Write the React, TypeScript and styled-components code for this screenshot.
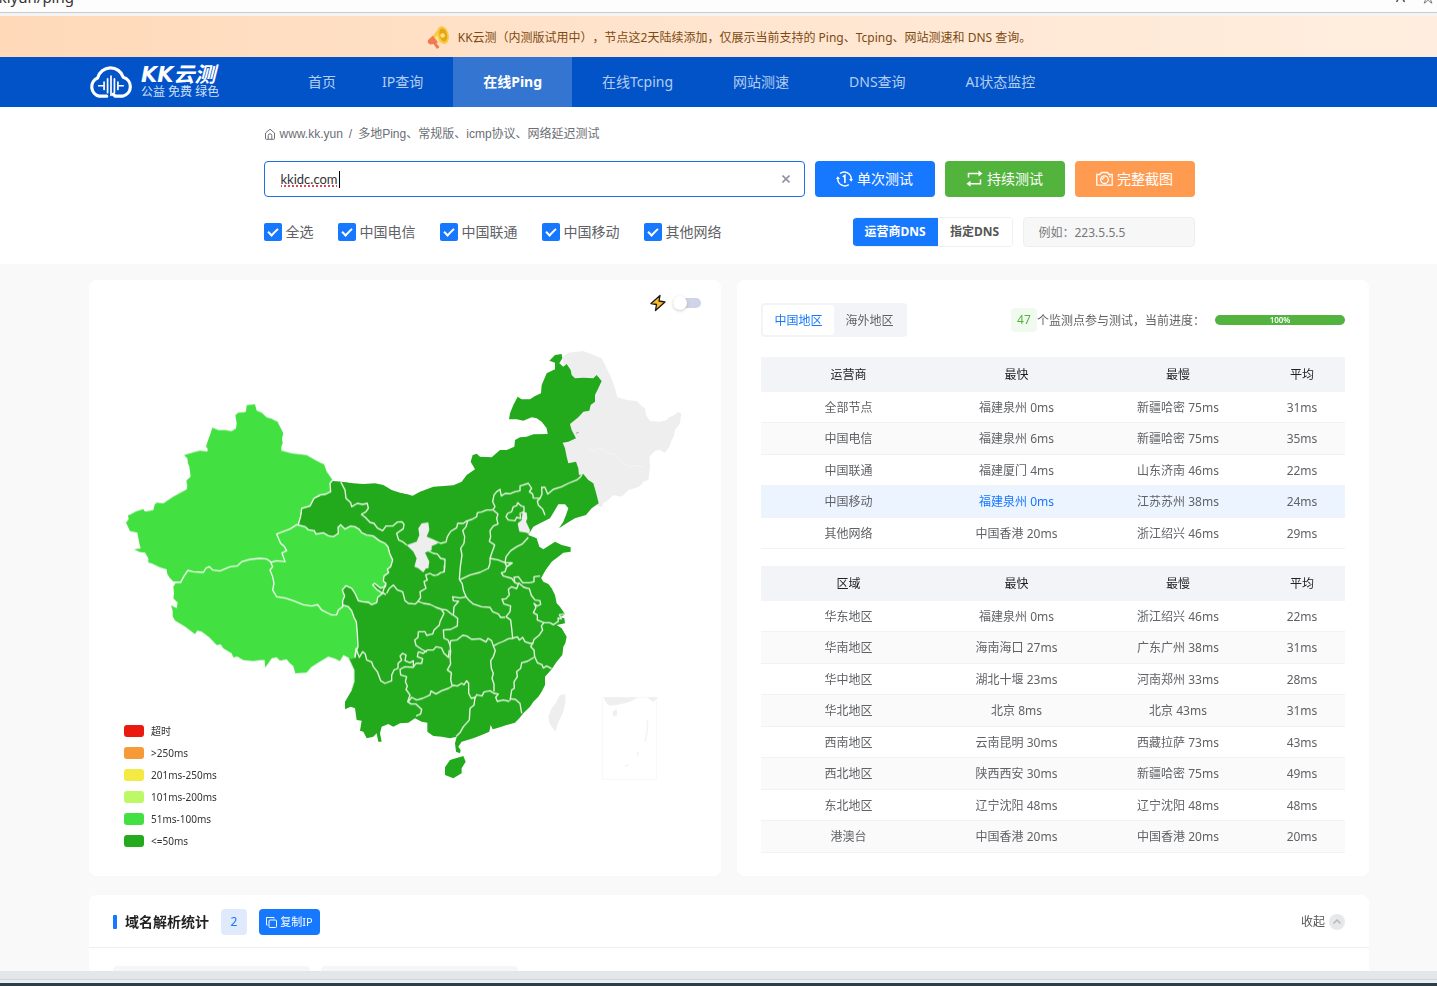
import React from 'react';
import styled, { createGlobalStyle } from 'styled-components';

const GlobalStyle = createGlobalStyle`
  *, *::before, *::after { box-sizing: border-box; }
  body {
    margin: 0;
    color: #606266;
    background: #f9f9f9;
    font: 12px/18px "Noto Sans", "Noto Sans CJK SC", sans-serif;
    text-spacing-trim: space-all;
  }
  button, input { font: inherit; }
  button { cursor: pointer; border: 0; padding: 0; }
`;

const Page = styled.div`
  display: flex;
  flex-direction: column;
  height: 100vh;
  overflow: hidden;
`;

const AddressStrip = styled.div`
  flex: none;
  display: flex;
  justify-content: space-between;
  align-items: flex-end;
  height: 16px;
  padding-bottom: 6px;
  overflow: hidden;
  background: #fdfdfd;
  border-bottom: 3px solid #f4f4f4;
  box-shadow: inset 0 -1px #cbcbcb;
  color: #333;
  font-size: 15px;
  line-height: 20px;
`;

const Address = styled.span`
  display: flex;
  justify-content: flex-end;
  width: 74px;
`;

const AddressTools = styled.span`
  display: flex;
  gap: 16px;
  padding-right: 2px;
  font-size: 14px;
`;

const Site = styled.div`
  flex: 1;
  min-height: 0;
  overflow: hidden;
`;

const Notice = styled.div`
  display: flex;
  align-items: center;
  justify-content: center;
  gap: 8px;
  height: 41px;
  padding: 2px 0 0 21px;
  background: linear-gradient(90deg, #ffd9b8, #ffe5cf 50%, #ffeedf);
  color: #7c4a12;
`;

const NavBar = styled.header`
  height: 50px;
  padding-left: 21px;
  background: #0353c8;
`;

const Wide = styled.div`
  display: flex;
  max-width: 1280px;
  height: 100%;
  margin: 0 auto;
`;

const Logo = styled.a`
  display: flex;
  align-items: center;
  gap: 8px;
  width: 189px;
  color: #fff;
  text-decoration: none;
`;

const LogoText = styled.span`
  display: flex;
  flex-direction: column;
`;

const LogoName = styled.span`
  font: italic bold 21px/20px "DejaVu Sans", "Noto Sans CJK SC", sans-serif;
`;

const LogoNote = styled.span`
  color: #cfe0f8;
  line-height: 14px;
`;

const NavLinks = styled.nav`
  display: flex;
`;

const NavLink = styled.a<{ $active?: boolean; $tight?: boolean }>`
  display: flex;
  align-items: center;
  padding: 0 ${p => (p.$tight ? 16 : 30)}px 0 30px;
  background: ${p => (p.$active ? '#3575d2' : 'transparent')};
  color: ${p => (p.$active ? '#fff' : '#b3cdf0')};
  font-size: 14px;
  font-weight: ${p => (p.$active ? 700 : 400)};
  text-decoration: none;
  white-space: nowrap;
`;

const SearchArea = styled.section`
  height: 157px;
  padding: 18px 0 0 21px;
  background: #fff;
`;

const SearchInner = styled.div`
  display: flex;
  flex-direction: column;
  max-width: 931px;
  margin: 0 auto;
`;

const Crumbs = styled.div`
  display: flex;
  align-items: center;
  gap: 4px;
  color: #6b6e75;
  font-family: "Liberation Sans", "Noto Sans CJK SC", sans-serif;
`;

const CrumbLink = styled.a`
  color: inherit;
  text-decoration: none;
`;

const Slash = styled.span`
  padding: 0 2px;
`;

const SearchRow = styled.div`
  display: flex;
  gap: 10px;
  margin-top: 18px;
`;

const HostField = styled.div`
  position: relative;
  flex: 1;
  display: flex;
  align-items: center;
  height: 36px;
  padding: 0 11px 0 16px;
  border: 1px solid #1f6fe0;
  border-radius: 4px;
`;

const HostInput = styled.input`
  flex: 1;
  border: 0;
  padding: 0;
  outline: 0;
  background: none;
  color: #333;
  font: 13px/20px Lato, sans-serif;
  text-decoration: underline dotted #e0405a 2px;
`;

const Caret = styled.span`
  position: absolute;
  left: 74px;
  top: 9px;
  width: 1px;
  height: 17px;
  background: #000;
`;

const Clear = styled.button`
  display: grid;
  place-items: center;
  width: 14px;
  height: 14px;
  background: none;
  color: #8f939b;
`;

const ActionButton = styled.button<{ $bg: string }>`
  display: flex;
  align-items: center;
  justify-content: center;
  gap: 4px;
  width: 120px;
  height: 36px;
  border-radius: 4px;
  background: ${p => p.$bg};
  color: #fff;
  font-size: 14px;
`;

const OptionRow = styled.div`
  display: flex;
  align-items: center;
  margin-top: 20px;
  height: 30px;
`;

const Checks = styled.div`
  flex: 1;
  display: flex;
  gap: 24px;
`;

const CheckLabel = styled.label`
  display: flex;
  align-items: center;
  gap: 4px;
  font-size: 14px;
`;

const CheckInput = styled.input`
  appearance: none;
  display: grid;
  place-items: center;
  width: 18px;
  height: 18px;
  margin: 0;
  border-radius: 2px;
  background: #1677ff;
  &::after {
    content: "";
    width: 10px;
    height: 6px;
    margin-bottom: 3px;
    border: solid #fff;
    border-width: 0 0 2px 2px;
    transform: rotate(-45deg);
  }
`;

const Segment = styled.div`
  display: flex;
  height: 30px;
  border: 1px solid #f0f0f0;
  border-left: 0;
  border-radius: 4px;
  overflow: hidden;
`;

const SegmentButton = styled.button<{ $on?: boolean }>`
  width: ${p => (p.$on ? 85 : 74)}px;
  background: ${p => (p.$on ? '#1677ff' : '#fff')};
  color: ${p => (p.$on ? '#fff' : '#555')};
  font-weight: 700;
`;

const DnsInput = styled.input`
  width: 172px;
  height: 30px;
  margin-left: 10px;
  padding: 0 15px;
  border: 1px solid #eee;
  border-radius: 4px;
  background: #f7f7f7;
  &::placeholder { color: #777; }
`;

const Content = styled.main`
  padding: 16px 0 0 21px;
`;

const ContentInner = styled.div`
  max-width: 1280px;
  margin: 0 auto;
`;

const Panels = styled.div`
  display: grid;
  grid-template-columns: 1fr 1fr;
  gap: 16px;
`;

const Card = styled.section`
  background: #fff;
  border-radius: 8px;
`;

const MapCard = styled(Card)`
  display: flex;
  flex-direction: column;
`;

const MapTools = styled.div`
  display: flex;
  align-items: center;
  justify-content: flex-end;
  gap: 7px;
  padding: 14px 20px 0 0;
`;

const Switch = styled.input`
  appearance: none;
  display: flex;
  align-items: center;
  width: 28px;
  height: 10px;
  margin: 0;
  border-radius: 5px;
  background: #cfd5e6;
  &::after {
    content: "";
    width: 14px;
    height: 14px;
    border-radius: 50%;
    background: #fff;
    box-shadow: 0 1px 3px rgba(0, 0, 0, 0.2);
  }
`;

const MapStack = styled.div`
  flex: 1;
  display: grid;
  padding-top: 23px;
  & > * { grid-area: 1 / 1; }
`;

const MapSvg = styled.svg`
  display: block;
  width: 100%;
`;

const Legend = styled.ul`
  align-self: end;
  display: flex;
  flex-direction: column;
  gap: 4px;
  width: 130px;
  margin: 0 0 26px 35px;
  padding: 0;
  list-style: none;
  color: #333;
  font-size: 10px;
`;

const LegendItem = styled.li<{ $color: string }>`
  display: flex;
  align-items: center;
  gap: 7px;
  &::before {
    content: "";
    width: 20px;
    height: 12px;
    border-radius: 3px;
    background: ${p => p.$color};
  }
`;

const StatsCard = styled(Card)`
  padding: 23px 24px;
`;

const StatsHead = styled.div`
  display: flex;
  align-items: center;
  height: 34px;
  margin-bottom: 20px;
`;

const Tabs = styled.div`
  display: flex;
  margin-right: auto;
  padding: 2px;
  border-radius: 4px;
  background: #f3f4f7;
`;

const Tab = styled.button<{ $on?: boolean }>`
  width: 71px;
  height: 30px;
  padding-top: 2px;
  border-radius: 3px;
  background: ${p => (p.$on ? '#fff' : 'transparent')};
  color: ${p => (p.$on ? '#1677ff' : '#606266')};
`;

const StatsText = styled.span`
  padding-top: 2px;
`;

const Count = styled.span`
  width: 26px;
  border-radius: 4px;
  background: #f0faef;
  color: #52b43c;
  line-height: 24px;
  text-align: center;
`;

const Progress = styled.div`
  width: 130px;
  margin-left: 10px;
  border-radius: 5px;
  background: #52b43f;
  color: #fff;
  font-size: 8px;
  font-weight: 600;
  line-height: 10px;
  text-align: center;
`;

const Table = styled.table`
  width: 100%;
  table-layout: fixed;
  border-collapse: collapse;
  text-align: center;
  & + & { margin-top: 17px; }
`;

const Th = styled.th<{ $w: number }>`
  width: ${p => p.$w}px;
  height: 35px;
  padding: 0;
  background: #f2f4f7;
  color: #222;
  font-weight: 400;
`;

const Row = styled.tr<{ $hot?: boolean }>`
  height: 31px;
  box-shadow: inset 0 -1px #f1f2f4;
  &:nth-child(even) {
    height: 32px;
    background: ${p => (p.$hot ? '#ecf4ff' : '#fafafa')};
  }
`;

const Td = styled.td<{ $link?: boolean }>`
  padding: 0;
  color: ${p => (p.$link ? '#1677ff' : 'inherit')};
`;

const DomainCard = styled(Card)`
  margin-top: 19px;
`;

const DomainHead = styled.div`
  display: flex;
  align-items: center;
  gap: 12px;
  height: 53px;
  padding: 2px 24px 0;
  border-bottom: 1px solid #eeeff1;
`;

const DomainTitle = styled.h2`
  display: flex;
  align-items: center;
  gap: 8px;
  margin: 0;
  color: #222;
  font-size: 14px;
  font-weight: 600;
  &::before {
    content: "";
    width: 4px;
    height: 14px;
    border-radius: 1px;
    background: #1677ff;
  }
`;

const DomainCount = styled.span`
  width: 26px;
  border-radius: 4px;
  background: #dfeafc;
  color: #1677ff;
  line-height: 26px;
  text-align: center;
`;

const CopyButton = styled.button`
  display: flex;
  align-items: center;
  justify-content: center;
  gap: 3px;
  width: 61px;
  height: 26px;
  border-radius: 4px;
  background: #1677ff;
  color: #fff;
  font-size: 11px;
`;

const Collapse = styled.button`
  display: flex;
  align-items: center;
  gap: 4px;
  margin-left: auto;
  background: none;
  color: #555;
`;

const DomainBlocks = styled.div`
  display: flex;
  gap: 11px;
  padding: 18px 24px;
`;

const DomainBlock = styled.div`
  width: 197px;
  height: 40px;
  border-radius: 4px;
  background: #f4f6f8;
`;

const WindowEdge = styled.div`
  flex: none;
  height: 15px;
  border-top: 8px solid #e3e7ea;
  border-bottom: 3px solid #2f3d46;
  background: #e9eff4;
  box-shadow: inset 0 1px #cfd5db;
`;

const navItems = ['首页', 'IP查询', '在线Ping', '在线Tcping', '网站测速', 'DNS查询', 'AI状态监控'];
const networks = ['全选', '中国电信', '中国联通', '中国移动', '其他网络'];
const legend: [string, string][] = [
  ['#ea1a10', '超时'],
  ['#f59a37', '>250ms'],
  ['#f3ea43', '201ms-250ms'],
  ['#bdf866', '101ms-200ms'],
  ['#43e041', '51ms-100ms'],
  ['#23aa1d', '<=50ms'],
];
const carriers = [
  ['全部节点', '福建泉州 0ms', '新疆哈密 75ms', '31ms'],
  ['中国电信', '福建泉州 6ms', '新疆哈密 75ms', '35ms'],
  ['中国联通', '福建厦门 4ms', '山东济南 46ms', '22ms'],
  ['中国移动', '福建泉州 0ms', '江苏苏州 38ms', '24ms'],
  ['其他网络', '中国香港 20ms', '浙江绍兴 46ms', '29ms'],
];
const regions = [
  ['华东地区', '福建泉州 0ms', '浙江绍兴 46ms', '22ms'],
  ['华南地区', '海南海口 27ms', '广东广州 38ms', '31ms'],
  ['华中地区', '湖北十堰 23ms', '河南郑州 33ms', '28ms'],
  ['华北地区', '北京 8ms', '北京 43ms', '31ms'],
  ['西南地区', '云南昆明 30ms', '西藏拉萨 73ms', '43ms'],
  ['西北地区', '陕西西安 30ms', '新疆哈密 75ms', '49ms'],
  ['东北地区', '辽宁沈阳 48ms', '辽宁沈阳 48ms', '48ms'],
  ['港澳台', '中国香港 20ms', '中国香港 20ms', '20ms'],
];

function StatTable({ first, rows, hot }: { first: string; rows: string[][]; hot?: number }) {
  const widths = [175, 161, 162, 86];
  return (
    <Table>
      <thead>
        <tr>
          {[first, '最快', '最慢', '平均'].map((h, i) => (
            <Th key={h} $w={widths[i]} scope="col">{h}</Th>
          ))}
        </tr>
      </thead>
      <tbody>
        {rows.map((r, i) => (
          <Row key={r[0]} $hot={hot === i}>
            {r.map((c, j) => (
              <Td key={j} $link={hot === i && j === 1}>{c}</Td>
            ))}
          </Row>
        ))}
      </tbody>
    </Table>
  );
}

const XINJIANG = 'M48 428 56 418 54 406 62 403 78 394 100 387 105 395 130 390 134 374 140 368 160 370 190 350 230 328 232 318 229 302 242 290 238 260 234 250 232 235 222 225 250 217 270 212 292 215 293 206 288 200 295 178 300 165 307 143 325 150 345 150 365 153 378 145 380 130 376 105 385 98 402 97 408 95 410 75 435 73 440 92 455 98 470 112 484 116 495 122 502 124 510 140 520 160 516 175 518 190 514 200 514 212 545 220 590 225 612 238 635 250 642 252 650 275 668 300 660 310 662 335 645 343 630 345 612 355 600 378 575 385 572 408 565 433 540 447 500 462 512 490 522 498 530 512 516 519 525 545 500 542 485 547 470 537 450 535 420 538 395 545 382 558 360 560 330 573 308 570 298 560 288 564 280 577 250 575 234 571 222 588 212 607 190 605 178 592 172 582 170 568 150 562 125 550 115 548 115 535 105 518 90 516 72 508 92 505 88 490 82 458 60 453Z';
const QINGHAI = 'M500 462 540 447 560 434 585 440 595 449 613 452 618 462 640 458 655 467 670 470 685 460 684 442 692 434 705 447 722 438 735 440 748 448 755 458 770 465 790 468 808 482 825 490 834 500 839 520 848 540 842 560 832 568 836 578 822 588 820 603 828 610 826 620 812 624 794 610 788 615 800 628 806 632 818 640 803 652 800 668 785 674 775 667 758 665 745 662 735 640 725 625 708 617 697 630 704 648 698 662 698 680 685 690 680 704 665 705 655 700 635 690 623 674 605 678 580 674 550 662 525 654 500 650 488 630 492 610 488 590 480 570 488 560 482 547 500 542 525 545 516 519 530 512 522 498 512 490Z';
const TIBET = 'M485 547 470 537 450 535 420 538 395 545 382 558 360 560 330 573 308 570 298 560 288 564 280 577 250 575 234 571 222 588 212 607 197 609 190 620 192 640 190 655 203 668 200 684 183 676 188 692 188 708 195 722 225 740 255 762 262 752 275 755 298 772 320 795 332 793 340 805 365 820 370 832 382 830 400 840 430 843 450 840 464 840 465 863 475 850 485 835 500 832 510 842 530 838 540 850 550 858 556 880 590 878 603 862 625 848 655 830 675 836 690 843 700 825 725 838 735 833 738 815 744 800 742 760 739 725 732 712 725 692 715 680 698 675 685 690 680 704 665 705 655 700 635 690 623 674 605 678 580 674 550 662 525 654 500 650 488 630 492 610 488 590 480 570 488 560Z';

const northBorders = [
  'M62 425 75 450 78 475 92 488 95 500 112 490 128 493 142 490 145 505 137 516 124 523 136 532 150 547 162 550 172 564 188 572 198 558 218 558 232 546 245 545 252 552 250 566 230 580 236 600 248 605 260 615',
  'M345 603 362 610 378 606 382 590 392 574 410 563 413 550 430 550 440 543 456 538 470 530 472 518 485 516 500 510 518 510 525 500 518 485 522 465 530 455 540 448 544 468 556 460 570 461 585 455 600 452 600 438 625 430 635 445 628 455 638 462 640 474 660 475 666 462 665 442 675 442 683 462 700 448 725 440 745 430 770 420 780 412 787 402',
  'M660 475 652 483 655 495 668 507 675 525',
  'M443 543 438 560 428 572 434 590 432 610 422 625 426 645 421 680 418 718',
  'M520 510 534 522 530 535 534 552 520 558 510 572 512 590 508 604 524 615 515 640 510 655 510 670 505 685 480 697 450 705 418 720',
  'M510 655 535 660 555 668 558 650 572 632 590 620 607 612 625 592',
  'M555 668 560 680 578 668',
  'M563 520 575 515 580 500 590 497 593 488 604 498 612 500 612 515 600 520 602 535 590 532 585 542 565 540 558 530Z',
  'M325 632 340 640 352 642 362 655 375 658 374 685 372 697',
];

const southBorders = [
  'M343 15 343 35 332 38 322 45 310 46 300 40 287 45 292 60 282 65 288 85 270 95 272 112 263 125',
  'M170 100 178 85 190 75 202 90 218 95 225 122 235 130 255 132 265 124 280 130 300 133 318 142 335 148 350 150 368 165',
  'M410 110 390 114 368 110 370 122 386 124 372 140 370 165 383 175 382 198 362 208 340 210 342 235 354 240 360 255',
  'M388 58 397 72 400 90 408 110 418 122 430 132 455 140 480 142 488 155 505 162 512 172 525 172',
  'M525 8 545 8 530 20 525 35 514 38 520 48 545 55 555 68 565 72 560 86 545 80 535 88 538 105 528 116 516 118 522 132 542 138 540 155 528 170 542 180 545 205 548 235',
  'M555 68 552 52 565 50 578 68 600 68 612 65 612 50 630 48',
  'M565 68 582 82 598 86 604 106 615 120 630 122 632 133 622 138 612 130 618 142 610 158 622 165 622 180 642 188 660 188 670 194 685 184 684 174 694 177 688 164 706 162',
  'M642 188 634 198 638 210 628 225 612 238 608 252',
  'M335 150 342 160 330 185 328 195 312 210 308 222 290 226 285 215 265 215 264 232 254 240 258 256 275 268 290 276',
  'M360 255 362 242 380 240 398 226 410 228 425 238 450 236 468 246 474 235 485 242 490 258 505 250 520 244 535 236 548 235 562 230 568 240 578 232 585 245 600 250 608 250',
  'M360 255 362 275 360 290 362 312 352 330 364 338 362 360 367 378',
  'M490 258 496 272 490 290 482 302 484 325 490 340 486 355 492 372 492 395',
  'M608 250 602 260 612 270 614 290 622 308 636 314 640 324 650 318 665 326',
  'M612 292 592 304 575 308 572 325 560 335 562 350 552 365 553 385 545 390 540 422',
  'M540 416 556 418 570 430 575 460',
  'M435 415 440 404 456 408 462 396 480 392 492 400 505 402 497 412 502 424 520 420 538 424',
  'M235 425 245 412 260 420 278 415 300 405 303 393 318 402 335 392 355 385 370 376 382 378 395 370 402 374 410 362 416 370 416 400 424 415 435 412 432 435 420 445 418 480 400 500 390 518 378 530',
  'M265 275 280 280 292 270 310 270 318 260 335 264 342 280 355 292 358 270',
  'M265 275 262 290 278 296 275 310 258 310 250 322 225 320 210 328 212 345 230 350 226 365 232 378 228 388 240 405 233 425 243 432 258 432 275 448 272 462 258 468',
  'M75 290 78 265 88 292 98 275 106 282 110 300 125 306 130 320 142 335 152 362 165 370 185 362 185 345 192 330 204 325 204 310 215 300 210 288 218 280 228 285 225 302 240 308 250 302 250 318',
  'M165 75 158 98 168 104',
];

function ChinaMap() {
  return (
    <MapSvg viewBox="267 1005 1896 1560" role="img" aria-label="中国地区延迟分布">
      <defs>
        <filter id="coast" x="0" y="0" width="1" height="1">
          <feTurbulence type="fractalNoise" baseFrequency="0.18" numOctaves="2" seed="4" />
          <feDisplacementMap in="SourceGraphic" scale="3" xChannelSelector="R" yChannelSelector="G" />
        </filter>
      </defs>
      <g fill="#eee">
        <path transform="translate(960 1020)" d="M727 50 745 38 790 33 820 45 845 55 860 85 872 110 885 145 892 172 920 180 950 183 962 196 975 205 978 225 990 243 1020 245 1040 240 1050 230 1060 228 1074 216 1084 220 1080 250 1065 270 1062 288 1055 300 1048 320 1035 338 1018 330 1005 332 988 350 990 380 985 420 970 425 960 438 945 445 925 450 905 470 880 465 865 480 850 490 845 502 832 498 740 400 700 280 740 150Z" />
        <path transform="translate(990 1680)" d="M705 402 690 405 678 428 665 445 655 470 658 490 676 515 684 490 700 455 707 425Z" />
      </g>
      <g fill="none" stroke="#f5f5f5" strokeWidth="3" transform="translate(960 1020)">
        <path d="M765 290 780 296M805 325 822 332 835 326 850 330 862 340 890 345 905 365 930 380 945 376 970 382" />
        <path d="M768 280 776 277" stroke="#777" strokeWidth="2" />
      </g>
      <g transform="translate(990 1680)">
        <path d="M818 412H980V658H818Z" fill="none" stroke="#f8f8f8" strokeWidth="3" />
        <path d="M822 412H925Q890 435 840 437Q825 430 822 412ZM950 412H985L970 425ZM848 455 860 447 862 465 850 470Z" fill="#efefef" />
        <path d="M952 480V510L945 545M925 575 922 590M885 618 895 615" fill="none" stroke="#f4f4f4" strokeWidth="5" />
      </g>
      <g filter="url(#coast)">
        <g fill="#23aa1d">
          <path transform="translate(960 1020)" d="M62 425 100 430 130 432 165 430 190 435 215 450 240 458 278 467 300 455 340 440 400 436 425 425 440 405 465 388 452 365 458 345 470 341 480 350 515 352 540 330 560 330 583 320 585 300 600 292 620 290 640 283 683 282 680 265 665 245 650 235 635 232 610 242 590 238 567 238 570 220 580 195 593 170 605 178 630 178 645 168 663 160 665 135 680 100 705 88 705 68 688 62 705 45 725 42 727 55 718 70 730 80 740 72 752 90 755 105 765 115 790 113 820 115 830 105 845 123 835 145 825 165 825 185 812 195 808 212 790 215 775 232 750 252 755 270 768 295 745 305 728 308 735 325 740 350 745 370 768 365 775 385 777 405 790 402 805 420 820 430 830 465 836 490 815 505 798 525 765 535 740 550 717 565 730 545 738 525 745 505 735 493 715 493 705 510 690 535 660 550 640 560 625 585 650 595 658 620 670 628 690 615 705 605 725 615 752 622 752 635 730 638 715 650 695 665 680 685 660 720 0 720 0 430 35 425Z" />
          <path transform="translate(330 1140)" d="M500 462 565 433 572 408 575 385 600 378 612 355 645 343 662 335 660 310 668 303 700 306 900 345 900 930 725 930 733 905 733 870 718 838 700 700Z" />
          <path transform="translate(990 1680)" d="M60 290 75 315 75 375 60 400 45 425 45 448 62 440 75 445 80 480 95 482 90 512 100 515 110 535 130 530 140 520 145 545 155 545 150 520 155 500 175 492 190 500 210 490 235 488 255 475 275 485 292 488 292 515 310 528 335 530 360 535 380 530 375 550 378 575 390 580 392 570 385 560 395 545 430 535 455 525 478 515 482 495 488 508 500 505 530 495 555 488 568 475 580 460 600 440 610 425 625 410 635 395 645 375 645 350 665 328 680 305 697 285 700 260 706 250 710 230 695 205 680 195 705 190 703 175 690 172 705 163 690 140 680 130 675 105 665 85 655 72 640 65 630 48 650 25 668 0 60 0Z" />
          <path transform="translate(990 1680)" d="M345 622 360 600 400 588 407 605 395 625 395 640 370 655 345 645Z" />
        </g>
        <g fill="#43e041" stroke="#f2fbef" strokeWidth="4" transform="translate(330 1140)">
          <path d={XINJIANG} stroke="none" />
          <path d={TIBET} stroke="none" />
          <path d={QINGHAI} />
          <g fill="none">
            <path d="M668 300 660 310 662 335 645 343 630 345 612 355 600 378 575 385 572 408 565 433" />
            <path d="M485 547 470 537 450 535 420 538 395 545 382 558 360 560 330 573 308 570 298 560 288 564 280 577 250 575 234 571 222 588 212 607 192 607" />
            <path d="M698 675 715 680 725 692 732 712 739 725 742 760 744 800 738 815 735 833" />
          </g>
        </g>
        <g fill="none" stroke="#e8f8e3" strokeWidth="4" strokeLinejoin="round">
          <g transform="translate(960 1020)">
            {northBorders.map(d => <path key={d} d={d} />)}
          </g>
          <g transform="translate(990 1680)">
            {southBorders.map(d => <path key={d} d={d} />)}
          </g>
        </g>
        <g fill="#eee" transform="translate(960 1020)">
          <path d="M305 550 325 547 328 570 320 590 345 600 354 610 335 618 335 630 315 638 328 665 325 685 318 685 310 697 295 685 283 680 290 655 280 635 260 615 290 605 298 585 295 565Z" />
          <path d="M608 515 620 518 622 535 618 545 630 570 628 582 618 578 598 575 593 550 605 540Z" />
        </g>
      </g>
    </MapSvg>
  );
}

function Megaphone() {
  return (
    <svg width="23" height="25" viewBox="0 0 23 25" aria-hidden="true">
      <path d="M1 15 6 10.500 11 17 9.500 18.500 12.500 22 10 24 6.500 19 3.500 19.500Q0 18.500 1 15Z" fill="#f27a50" />
      <path d="M6 10.500 13 2 20 18 11 17Z" fill="#fbc94a" />
      <path d="M8 13 14 5 16 15 11 17Z" fill="#fff0b5" opacity=".7" />
      <ellipse cx="16" cy="10" rx="5.600" ry="9" transform="rotate(-14 16 10)" fill="#f9c93a" />
      <ellipse cx="16.200" cy="10" rx="3.800" ry="6.600" transform="rotate(-14 16 10)" fill="#e5a51c" />
      <circle cx="15.600" cy="10.500" r="2.300" fill="#ffe27a" />
    </svg>
  );
}

function CloudLogo() {
  return (
    <svg width="44" height="32" viewBox="2 1 40 30" fill="none" stroke="#fff" strokeLinecap="round" aria-hidden="true">
      <path d="M18 29.300H11A9 9 0 0 1 9.500 12.200A12.500 12.500 0 0 1 33.500 11.500A9.200 9.200 0 0 1 33 29.300H26L24 27.500" strokeWidth="3" strokeLinejoin="round" />
      <path d="M10.500 19.500H14M15.500 16V23M18.800 13V26M22 10.500V28.500M25.200 13V26M28.500 16V23M30 19.500H33.500" strokeWidth="1.600" />
    </svg>
  );
}

export default function App() {
  return (
    <Page>
      <GlobalStyle />
      <AddressStrip>
        <Address>kkiyun/ping</Address>
        <AddressTools><span>A</span><span>☆</span></AddressTools>
      </AddressStrip>
      <Site>
        <Notice>
          <Megaphone />
          <span>KK云测（内测版试用中），节点这2天陆续添加，仅展示当前支持的 Ping、Tcping、网站测速和 DNS 查询。</span>
        </Notice>
        <NavBar>
          <Wide>
            <Logo href="#">
              <CloudLogo />
              <LogoText>
                <LogoName>KK云测</LogoName>
                <LogoNote>公益 免费 绿色</LogoNote>
              </LogoText>
            </Logo>
            <NavLinks>
              {navItems.map((n, i) => (
                <NavLink key={n} href="#" $active={i === 2} $tight={i === 0}>{n}</NavLink>
              ))}
            </NavLinks>
          </Wide>
        </NavBar>
        <SearchArea>
          <SearchInner>
            <Crumbs>
              <svg width="12" height="12" viewBox="0 0 12 12" fill="none" stroke="currentColor" aria-hidden="true">
                <path d="M1.500 5 6 1.200 10.500 5V10.500Q10.500 11.300 9.700 11.300H2.300Q1.500 11.300 1.500 10.500ZM4.200 11V7.500Q4.200 5.800 6 5.800T7.800 7.500V11" />
              </svg>
              <CrumbLink href="#">www.kk.yun</CrumbLink>
              <Slash>/</Slash>
              <span>多地Ping、常规版、icmp协议、网络延迟测试</span>
            </Crumbs>
            <SearchRow>
              <HostField>
                <HostInput defaultValue="kkidc.com" aria-label="域名" />
                <Caret />
                <Clear aria-label="清除">
                  <svg width="8" height="8" viewBox="0 0 8 8" stroke="currentColor" strokeWidth="1.600"><path d="M.5.5 7.500 7.500M7.500.5.5 7.500" /></svg>
                </Clear>
              </HostField>
              <ActionButton $bg="#1677ff">
                <svg width="17" height="18" viewBox="0 0 17 18" fill="none" stroke="currentColor" strokeWidth="1.400" aria-hidden="true">
                  <path d="M4 3.500A7 7 0 0 1 15.200 9.500M12.800 14.600A7 7 0 0 1 1.800 8.500" />
                  <path d="M13 9H17L15.200 11.800ZM0 9H4L1.800 6.200Z" fill="currentColor" stroke="none" />
                  <path d="M6.800 6.800 8.900 5.300V13" strokeWidth="1.600" />
                </svg>
                单次测试
              </ActionButton>
              <ActionButton $bg="#52b43c">
                <svg width="17" height="18" viewBox="0 0 17 18" fill="none" stroke="currentColor" strokeWidth="1.500" aria-hidden="true">
                  <path d="M2.500 7.500V3.500H14M14.500 9.500V13.800H3" />
                  <path d="M12.500.5 16.500 3.500 12.500 6.500ZM4.500 10.800.5 13.800 4.500 16.800Z" fill="currentColor" stroke="none" />
                </svg>
                持续测试
              </ActionButton>
              <ActionButton $bg="#ff9b50">
                <svg width="17" height="18" viewBox="0 0 17 18" fill="none" stroke="currentColor" strokeWidth="1.300" aria-hidden="true">
                  <path d="M.8 4.500H4L5.500 2.500H11.500L13 4.500H16.200V15.200H.8Z" />
                  <circle cx="8.500" cy="9.700" r="3.800" />
                  <path d="M6.500 9.700A2 2 0 0 1 8.500 7.700M13.200 6.500H14.700" />
                </svg>
                完整截图
              </ActionButton>
            </SearchRow>
            <OptionRow>
              <Checks>
                {networks.map(n => (
                  <CheckLabel key={n}><CheckInput type="checkbox" defaultChecked />{n}</CheckLabel>
                ))}
              </Checks>
              <Segment>
                <SegmentButton $on>运营商DNS</SegmentButton>
                <SegmentButton>指定DNS</SegmentButton>
              </Segment>
              <DnsInput placeholder="例如：223.5.5.5" aria-label="指定DNS" />
            </OptionRow>
          </SearchInner>
        </SearchArea>
        <Content>
          <ContentInner>
            <Panels>
              <MapCard>
                <MapTools>
                  <svg width="16" height="18" viewBox="0 0 16 18" aria-hidden="true">
                    <path d="M10 1.500 1 9.500 6.500 10.500 5.500 16.500 15 8 9 7Z" fill="#fdb92c" stroke="#1a1a1a" strokeWidth="1.300" strokeLinejoin="round" />
                  </svg>
                  <Switch type="checkbox" role="switch" aria-label="加速" />
                </MapTools>
                <MapStack>
                  <ChinaMap />
                  <Legend>
                    {legend.map(([c, t]) => <LegendItem key={t} $color={c}>{t}</LegendItem>)}
                  </Legend>
                </MapStack>
              </MapCard>
              <StatsCard>
                <StatsHead>
                  <Tabs role="tablist">
                    <Tab role="tab" aria-selected $on>中国地区</Tab>
                    <Tab role="tab" aria-selected={false}>海外地区</Tab>
                  </Tabs>
                  <Count>47</Count>
                  <StatsText>个监测点参与测试，当前进度：</StatsText>
                  <Progress role="progressbar" aria-valuenow={100}>100%</Progress>
                </StatsHead>
                <StatTable first="运营商" rows={carriers} hot={3} />
                <StatTable first="区域" rows={regions} />
              </StatsCard>
            </Panels>
            <DomainCard>
              <DomainHead>
                <DomainTitle>域名解析统计</DomainTitle>
                <DomainCount>2</DomainCount>
                <CopyButton>
                  <svg width="11" height="11" viewBox="0 0 11 11" fill="none" stroke="currentColor" aria-hidden="true">
                    <rect x="3" y="3" width="7.500" height="7.500" rx="1" />
                    <path d="M1.500 8H.5V.5H8V1.500" />
                  </svg>
                  复制IP
                </CopyButton>
                <Collapse>
                  收起
                  <svg width="16" height="16" viewBox="0 0 16 16" aria-hidden="true">
                    <circle cx="8" cy="8" r="8" fill="#e6e8ea" />
                    <path d="M4.500 9.500 8 6 11.500 9.500" fill="none" stroke="#b4b8bd" strokeWidth="1.500" />
                  </svg>
                </Collapse>
              </DomainHead>
              <DomainBlocks>
                <DomainBlock />
                <DomainBlock />
              </DomainBlocks>
            </DomainCard>
          </ContentInner>
        </Content>
      </Site>
      <WindowEdge />
    </Page>
  );
}
